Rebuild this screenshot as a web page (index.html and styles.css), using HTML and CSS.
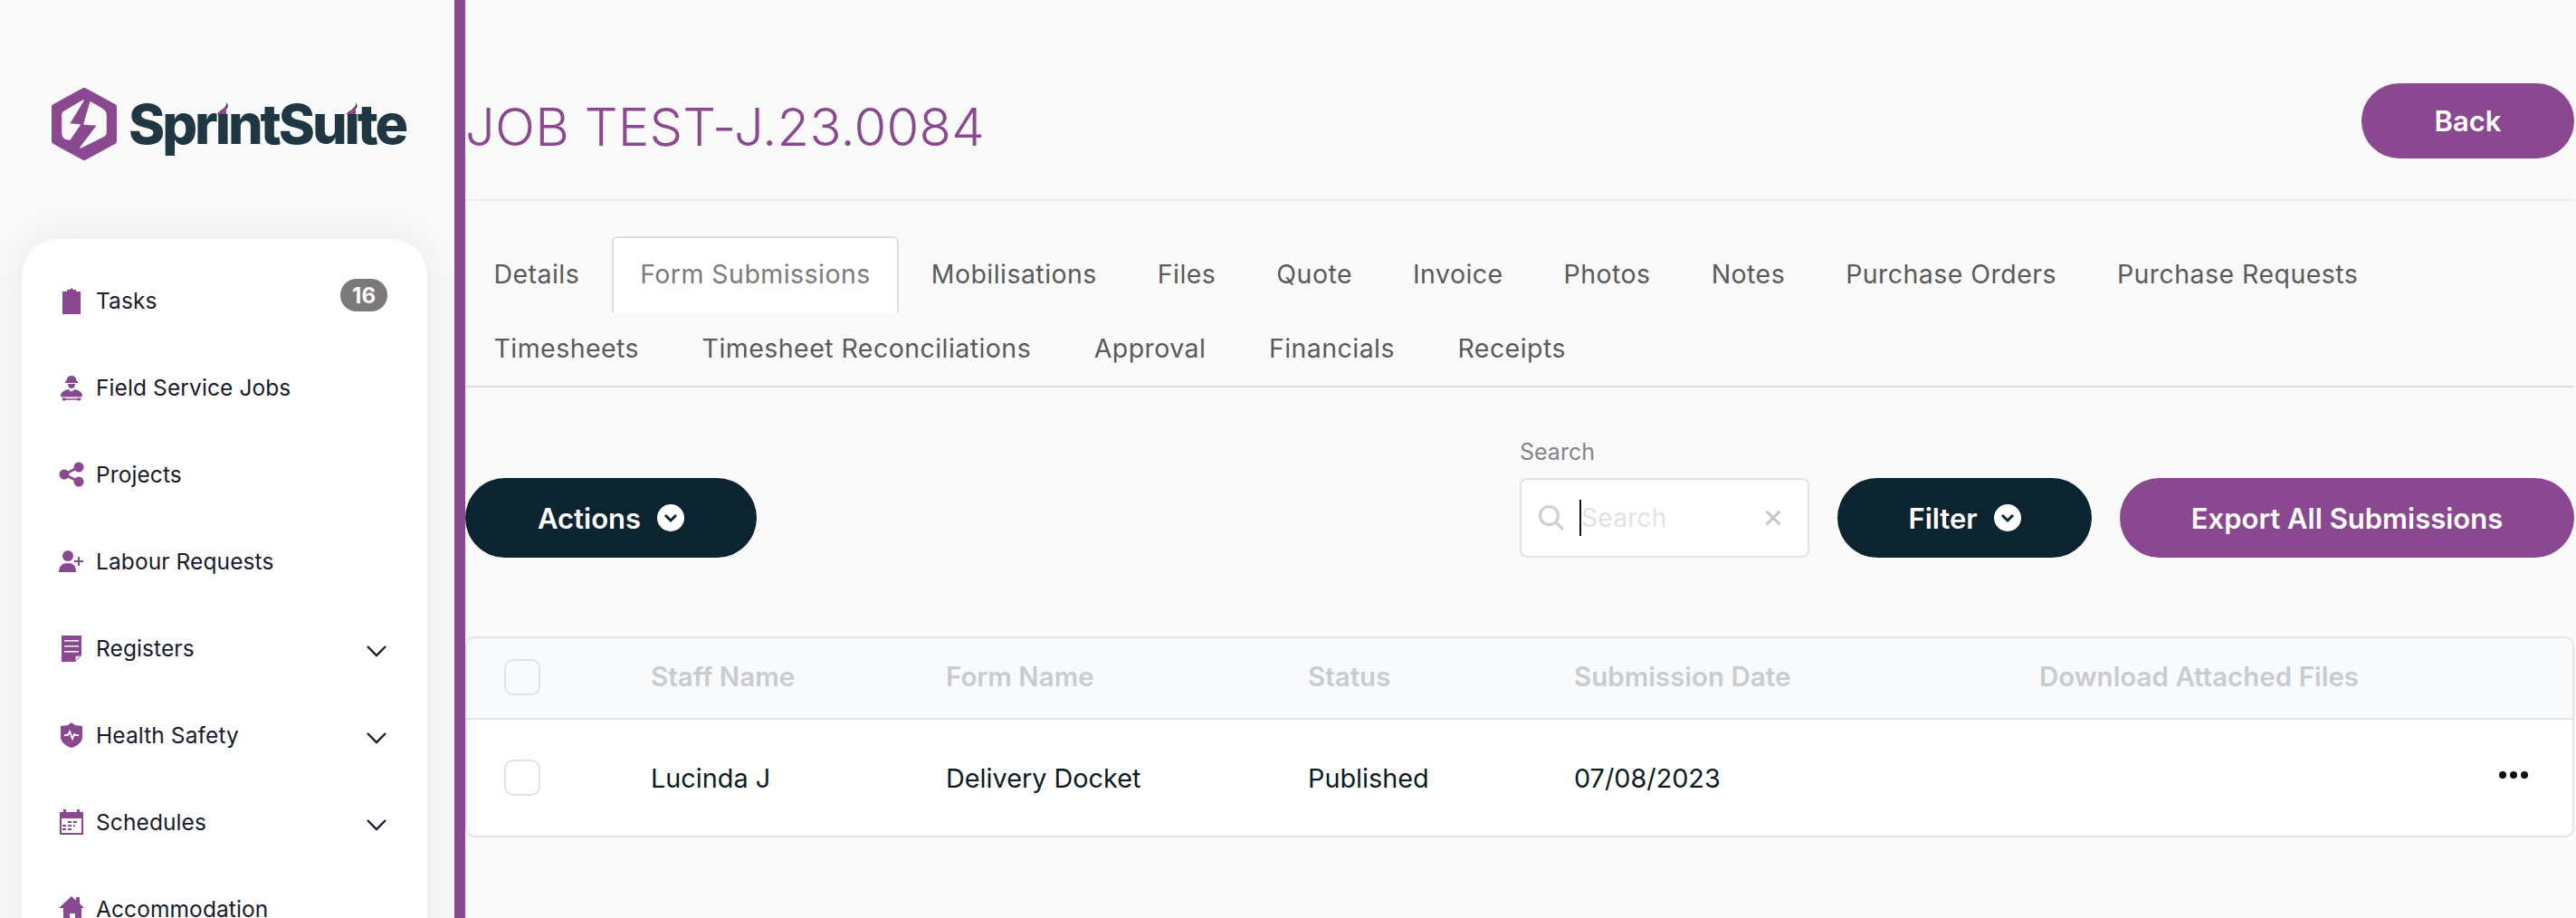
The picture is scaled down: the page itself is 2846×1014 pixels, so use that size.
FILE: index.html
```html
<!DOCTYPE html>
<html lang="en">
<head>
<meta charset="utf-8">
<title>SprintSuite - Job TEST-J.23.0084</title>
<link rel="stylesheet" href="styles.css">
</head>
<body>
<div class="app">
  <aside class="sidebar">
    <div class="brand">
      <svg class="brand-mark" viewBox="0 0 74 80" aria-hidden="true">
        <path class="hex" d="M37 3 70 21V59L37 77 4 59V21Z"/>
        <path class="hex-cut" d="M36 14 14 27Q13 28 13 30V50Q13 57 21 57L32 41 20 40Z"/>
        <path class="hex-cut" d="M44 16 56 23Q61 26 61 30V50Q61 52 59 53L33 66 52 41 37 40Z"/>
      </svg>
      <span class="brand-name">Spr<span class="brand-i">i</span>ntSu<span class="brand-i">i</span>te</span>
    </div>
    <nav class="nav-card">
      <a class="nav-item">
        <svg class="nav-icon" viewBox="0 0 28 30"><path d="M4 5h5V3h3l2-2 2 2h3v2h5v25H4z"/></svg>
        <span class="nav-label">Tasks</span><span class="badge">16</span>
      </a>
      <a class="nav-item">
        <svg class="nav-icon" viewBox="0 0 28 30"><path d="M8.500 8c0-4 2.500-6 5.500-6s5.500 2 5.500 6H21v2H7V8zM10 11h8c0 3-1.500 5-4 5s-4-2-4-5zM10 17l4 2.500 4-2.500c4 1 7 3 8 6 .5 2-1.500 3-3 2.500H5c-1.500.5-3.500-.5-3-2.500 1-3 4-5 8-6z"/><path d="M5 26.500h2l1 .8h12l1-.8h2l2 1.500-2 1.500h-2l-1-.8H8l-1 .8H5L3 28z"/></svg>
        <span class="nav-label">Field Service Jobs</span>
      </a>
      <a class="nav-item">
        <svg class="nav-icon" viewBox="0 0 28 30"><circle cx="6" cy="15" r="5.500"/><circle cx="22" cy="7" r="5.500"/><circle cx="22" cy="23" r="5.500"/><path class="nav-stroke" d="M6 15 22 7M6 15l16 8"/></svg>
        <span class="nav-label">Projects</span>
      </a>
      <a class="nav-item">
        <svg class="nav-icon" viewBox="0 0 28 30"><circle cx="10" cy="9" r="6"/><path d="M0 27c0-7 4-10 10-10s9 3 9 10z"/><path d="M21 10h2v4h4v2h-4v4h-2v-4h-4v-2h4z"/></svg>
        <span class="nav-label">Labour Requests</span>
      </a>
      <a class="nav-item">
        <svg class="nav-icon" viewBox="0 0 28 30"><path d="M3 1h22v22l-7 7H3z"/><path class="nav-cut" d="M6 6h16v1.500H6zM6 12h16v1.500H6zM6 18h16v1.500H6zM23.500 23.500 18.500 24v4.500z"/></svg>
        <span class="nav-label">Registers</span>
        <svg class="chev" viewBox="0 0 22 14"><path d="M1 2l10 10L21 2"/></svg>
      </a>
      <a class="nav-item">
        <svg class="nav-icon" viewBox="0 0 28 30"><path d="M14 1l4 3 8 1v12c0 6-6 10-12 12C8 27 2 23 2 17V5l8-1z"/><path class="nav-line" d="M6 15h4l2-4 3 8 2-5 1 1h4"/></svg>
        <span class="nav-label">Health Safety</span>
        <svg class="chev" viewBox="0 0 22 14"><path d="M1 2l10 10L21 2"/></svg>
      </a>
      <a class="nav-item">
        <svg class="nav-icon" viewBox="0 0 28 30"><path d="M1 4h4V1h3v3h12V1h3v3h4v25H1z"/><path class="nav-cut" d="M3 11h22v16H3z"/><path d="M10 14h4v2h-4zM16 14h4v2h-4zM4 18h4v2H4zM10 18h4v2h-4zM16 18h2v2h-2zM4 22h4v2H4zM10 22h4v2h-4z"/></svg>
        <span class="nav-label">Schedules</span>
        <svg class="chev" viewBox="0 0 22 14"><path d="M1 2l10 10L21 2"/></svg>
      </a>
      <a class="nav-item">
        <svg class="nav-icon" viewBox="0 0 28 30"><path d="M14 1l5 4.500V2h4v7l5 5h-3v15h-7v-9h-6v9H5V14H0z"/></svg>
        <span class="nav-label">Accommodation</span>
      </a>
    </nav>
  </aside>

  <main class="main">
    <header class="page-head">
      <h1 class="page-title">JOB TEST-J.23.0084</h1>
      <button class="btn btn-purple btn-back">Back</button>
    </header>

    <div class="tabs">
      <div class="tab-row">
        <a class="tab">Details</a>
        <a class="tab tab-active">Form Submissions</a>
        <a class="tab">Mobilisations</a>
        <a class="tab">Files</a>
        <a class="tab">Quote</a>
        <a class="tab">Invoice</a>
        <a class="tab">Photos</a>
        <a class="tab">Notes</a>
        <a class="tab">Purchase Orders</a>
        <a class="tab">Purchase Requests</a>
      </div>
      <div class="tab-row tab-row-second">
        <a class="tab">Timesheets</a>
        <a class="tab">Timesheet Reconciliations</a>
        <a class="tab">Approval</a>
        <a class="tab">Financials</a>
        <a class="tab">Receipts</a>
      </div>
    </div>

    <section class="toolbar">
      <button class="btn btn-dark btn-actions">Actions
        <svg class="btn-chev" viewBox="0 0 30 30"><circle cx="15" cy="15" r="15"/><path d="M9 12l6 6 6-6"/></svg>
      </button>
      <div class="toolbar-right">
        <div class="search-field">
          <label class="search-label">Search</label>
          <div class="search-box">
            <svg class="search-icon" viewBox="0 0 30 30"><circle cx="12.500" cy="12.500" r="10"/><path d="M20 20l8 8"/></svg>
            <span class="caret"></span>
            <span class="placeholder">Search</span>
            <svg class="clear-icon" viewBox="0 0 20 20"><path d="M2 2l16 16M18 2 2 18"/></svg>
          </div>
        </div>
        <button class="btn btn-dark btn-filter">Filter
          <svg class="btn-chev" viewBox="0 0 30 30"><circle cx="15" cy="15" r="15"/><path d="M9 12l6 6 6-6"/></svg>
        </button>
        <button class="btn btn-purple btn-export">Export All Submissions</button>
      </div>
    </section>

    <section class="table">
      <div class="row row-head">
        <span class="cell-check"><span class="check"></span></span>
        <span>Staff Name</span><span>Form Name</span><span>Status</span><span>Submission Date</span><span>Download Attached Files</span><span></span>
      </div>
      <div class="row row-body">
        <span class="cell-check"><span class="check"></span></span>
        <span>Lucinda J</span><span>Delivery Docket</span><span>Published</span><span>07/08/2023</span><span></span>
        <span class="dots"><i></i><i></i><i></i></span>
      </div>
    </section>
  </main>
</div>
</body>
</html>
```

FILE: styles.css
```css
* { box-sizing: border-box; }
html, body { margin: 0; height: 100%; overflow: hidden; background: #fafafa; }
body { font-family: Inter, "Open Sans", sans-serif; color: #0b1a24; }
button { font-family: inherit; border: 0; cursor: pointer; }

.app { display: flex; height: 1014px; overflow: hidden; }

/* Sidebar */
.sidebar {
  flex: 0 0 514px;
  background: #f9f9f9;
  border-right: 12px solid #8a4890;
  padding: 97px 30px 0 24px;
  overflow: hidden;
}
.brand { display: flex; align-items: center; gap: 11px; height: 80px; padding-left: 31px; margin-bottom: 87px; }
.brand-mark { width: 76px; height: 80px; flex: none; }
.hex { fill: #8a4890; stroke: #8a4890; stroke-width: 6; stroke-linejoin: round; }
.hex-cut { fill: #f9f9f9; stroke: #f9f9f9; stroke-width: 1.500; stroke-linejoin: round; }
.brand-name { font-size: 61px; font-weight: 800; letter-spacing: -3.100px; color: #1f3742; line-height: 80px; white-space: nowrap; }
.brand-i { position: relative; }
.brand-i::after {
  content: "";
  position: absolute;
  left: 1px; right: 2px;
  top: 9px;
  height: 17px;
  background: linear-gradient(to bottom right, transparent 50%, #8a4890 50%) bottom / 100% 9px no-repeat, #f9f9f9;
}

.nav-card {
  background: #fff;
  border-radius: 40px 40px 0 0;
  box-shadow: 0 0 40px rgba(0, 0, 0, .07);
  padding-top: 20px;
  height: 900px;
}
.nav-item { display: flex; align-items: center; height: 96px; padding: 0 45px 0 41px; color: #161a2c; }
.nav-icon { width: 28px; height: 30px; flex: none; margin-right: 13px; fill: #8a4890; }
.nav-stroke { stroke: #8a4890; stroke-width: 3; fill: none; }
.nav-cut { fill: #fff; }
.nav-line { fill: none; stroke: #fff; stroke-width: 1.800; }
.nav-label { font-size: 24.500px; flex: 1; white-space: nowrap; letter-spacing: .1px; padding-bottom: 1px; }
.badge {
  width: 52px; height: 36px; border-radius: 18px; background: #7a7a7a; color: #fff;
  font-size: 24px; font-weight: 700; display: flex; align-items: center; justify-content: center;
  margin: -12px -1px 0 0;
}
.chev { width: 22px; height: 14px; fill: none; stroke: #161a2c; stroke-width: 2.400; margin-top: 6px; }

/* Main */
.main { flex: 1; min-width: 0; padding-right: 2px; }
.page-head {
  height: 222px;
  border-bottom: 2px solid #eee;
  display: flex; align-items: center; justify-content: space-between;
  padding-top: 47px;
}
.page-title { margin: 12px 0 0; font-size: 58px; font-weight: 300; color: #8a4890; letter-spacing: .2px; white-space: nowrap; }
.btn { display: inline-flex; align-items: center; justify-content: center; color: #fff; font-weight: 600; border-radius: 48px; height: 88px; font-size: 31px; }
.btn-purple { background: #8a4890; }
.btn-dark { background: #0c2430; }
.btn-back { width: 235px; height: 83px; }
.btn-actions { width: 322px; gap: 18px; }
.btn-filter { width: 281px; gap: 18px; }
.btn-export { width: 502px; }
.btn-chev { width: 30px; height: 30px; fill: #fff; }
.btn-chev path { fill: none; stroke: #0c2430; stroke-width: 3; }

/* Tabs */
.tabs { padding: 39px 0 0; border-bottom: 2px solid #dedede; height: 206px; }
.tab-row { display: flex; column-gap: 4px; }
.tab-row-second { column-gap: 6.500px; margin-top: -2px; }
.tab {
  display: flex; align-items: center; height: 84px; padding: 0 29.500px 4px;
  font-size: 28.500px; letter-spacing: .45px; color: #5a5a5a; white-space: nowrap;
  border: 2px solid transparent; border-bottom: 0; border-radius: 6px 6px 0 0;
}
.tab-active { background: #fff; border-color: #dedede; color: #7b7b7b; }

/* Toolbar */
.toolbar { display: flex; justify-content: space-between; align-items: flex-end; margin-top: 56px; }
.toolbar-right { display: flex; align-items: flex-end; gap: 31px; }
.search-label { display: block; font-size: 25px; color: #7f858a; margin-bottom: 14px; }
.search-box {
  width: 320px; height: 88px; background: #fff; border: 2px solid #dfe3e6; border-radius: 8px;
  display: flex; align-items: center; padding: 0 29px 0 18px;
}
.search-icon { width: 30px; height: 30px; fill: none; stroke: #cdd0d3; stroke-width: 3.200; flex: none; }
.caret { width: 2px; height: 40px; background: #111; margin-left: 16px; flex: none; }
.placeholder { font-size: 28px; color: #dfe3e6; flex: 1; letter-spacing: .3px; }
.clear-icon { width: 18px; height: 18px; stroke: #c4c8cc; stroke-width: 3.600; fill: none; flex: none; }

/* Table */
.table { margin-top: 87px; border: 2px solid #e1e3e6; border-radius: 10px; overflow: hidden; background: #fff; }
.row { display: grid; grid-template-columns: 203px 326px 400px 294px 514px 1fr 81px; align-items: center; font-size: 28px; }
.row-head { height: 90px; background: #f9fafb; border-bottom: 2px solid #e1e3e6; color: #c9cccf; font-weight: 600; font-size: 29.500px; padding-bottom: 4px; }
.row-head .cell-check { margin-top: 2px; }
.row-body { height: 128px; color: #0b1a24; font-size: 28.800px; }
.cell-check { padding-left: 41px; display: flex; }
.check { width: 40px; height: 40px; border: 2px solid #e1e3e6; border-radius: 10px; background: transparent; }
.dots { display: flex; gap: 4px; margin-bottom: 6px; }
.dots i { width: 8px; height: 8px; border-radius: 50%; background: #111; }
```
